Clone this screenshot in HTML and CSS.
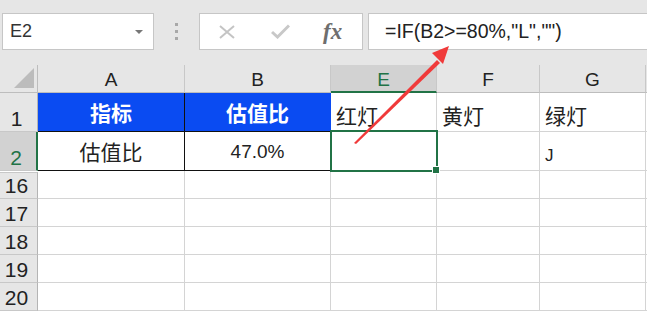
FILE: index.html
```html
<!DOCTYPE html>
<html lang="zh-CN">
<head>
    <meta charset="UTF-8">
    <meta name="viewport" content="width=device-width, initial-scale=1.0">
    <title>红绿灯公式</title>
    <link rel="stylesheet" href="styles.css">
</head>
<body>
    <div class="toolbar">
        <div class="namebox">
            <span>E2</span>
            <span class="drop"></span>
        </div>
        <div class="grip"><i></i><i></i><i></i></div>
        <div class="fx-buttons">
            <svg width="18" height="14" viewBox="0 0 18 14"><path d="M2 1 L16 13 M16 1 L2 13" stroke="#c4c4c4" stroke-width="2" fill="none"/></svg>
            <svg width="19" height="15" viewBox="0 0 19 15"><path d="M1 8 L6.5 13 L18 1.5" stroke="#c8c8c8" stroke-width="3" fill="none"/></svg>
            <span class="fx">fx</span>
        </div>
        <div class="formula">=IF(B2&gt;=80%,"L","")</div>
    </div>

    <div class="sheet">
        <!-- шапка -->
        <div class="corner"><span></span></div>
        <div class="colhead">A</div>
        <div class="colhead">B</div>
        <div class="colhead active">E</div>
        <div class="colhead">F</div>
        <div class="colhead">G</div>
        <div class="colhead edge"></div>

        <!-- строка 1 -->
        <div class="rowhead">1</div>
        <div class="cell blue">指标</div>
        <div class="cell blue last">估值比</div>
        <div class="cell left">红灯</div>
        <div class="cell left">黄灯</div>
        <div class="cell left">绿灯</div>
        <div class="cell edge"></div>

        <!-- строка 2 -->
        <div class="rowhead active">2</div>
        <div class="cell boxed">估值比</div>
        <div class="cell boxed num">47.0%</div>
        <div class="cell selected"><span class="handle"></span></div>
        <div class="cell"></div>
        <div class="cell left j">J</div>
        <div class="cell edge"></div>

        <div class="rowhead gap">16</div>
        <div class="cell"></div><div class="cell"></div><div class="cell"></div><div class="cell"></div><div class="cell"></div><div class="cell edge"></div>
        <div class="rowhead">17</div>
        <div class="cell"></div><div class="cell"></div><div class="cell"></div><div class="cell"></div><div class="cell"></div><div class="cell edge"></div>
        <div class="rowhead">18</div>
        <div class="cell"></div><div class="cell"></div><div class="cell"></div><div class="cell"></div><div class="cell"></div><div class="cell edge"></div>
        <div class="rowhead">19</div>
        <div class="cell"></div><div class="cell"></div><div class="cell"></div><div class="cell"></div><div class="cell"></div><div class="cell edge"></div>
        <div class="rowhead">20</div>
        <div class="cell"></div><div class="cell"></div><div class="cell"></div><div class="cell"></div><div class="cell"></div><div class="cell edge"></div>
    </div>

    <svg class="arrow" width="647" height="312" viewBox="0 0 647 312">
        <path d="M354 143 L437 60 L440 63 L356 144 Z" fill="#f03a3a"/>
        <path d="M449 46 L432 53 L443 64 Z" fill="#f03a3a"/>
    </svg>
</body>
</html>
```

FILE: styles.css
```css
body {
    margin: 0;
    width: 647px;
    height: 312px;
    overflow: hidden;
    position: relative;
    background: #fff;
    font-family: "Liberation Sans", "Noto Sans CJK SC", sans-serif;
    color: #222;
}
.toolbar {
    height: 65px;
    background: #e6e6e6;
    display: flex;
    align-items: flex-start;
    padding-top: 13px;
    box-sizing: border-box;
}
.namebox {
    width: 152px;
    height: 37px;
    margin-left: 2px;
    background: #fff;
    border: 1px solid #c6c6c6;
    box-sizing: border-box;
    display: flex;
    align-items: center;
    justify-content: space-between;
    padding: 0 10px 0 7px;
    font-size: 18px;
    color: #333;
}
.drop {
    width: 0;
    height: 0;
    border-left: 4px solid transparent;
    border-right: 4px solid transparent;
    border-top: 4px solid #777;
}
.grip {
    width: 45px;
    display: flex;
    flex-direction: column;
    align-items: center;
    gap: 4px;
    padding-top: 10px;
}
.grip i {
    width: 3px;
    height: 3px;
    background: #a8a8a8;
}
.fx-buttons {
    width: 164px;
    height: 37px;
    background: #fff;
    border: 1px solid #c6c6c6;
    box-sizing: border-box;
    display: flex;
    align-items: center;
    padding-left: 18px;
    gap: 35px;
}
.fx {
    font-family: "Liberation Serif", serif;
    font-style: italic;
    font-weight: bold;
    font-size: 23px;
    color: #6e6e6e;
    margin-left: -2px;
}
.formula {
    flex: 1;
    height: 37px;
    margin-left: 5px;
    background: #fff;
    border: 1px solid #c6c6c6;
    border-right: none;
    box-sizing: border-box;
    padding-left: 16px;
    font-size: 19.5px;
    line-height: 34px;
    color: #222;
}
.sheet {
    display: grid;
    grid-template-columns: 38px 147px 146px 106px 103px 106px 1fr;
    grid-template-rows: 28px 39px 39px repeat(5, 28px) 1fr;
    height: 247px;
}
.sheet > div {
    box-sizing: border-box;
    border-right: 1px solid #d4d4d4;
    border-bottom: 1px solid #d4d4d4;
}
.corner {
    background: #e6e6e6;
    position: relative;
    border-right: 1px solid #bdbdbd !important;
    border-bottom: 1px solid #bdbdbd !important;
}
.corner span {
    position: absolute;
    right: 3px;
    bottom: 4px;
    width: 0;
    height: 0;
    border-left: 20px solid transparent;
    border-bottom: 20px solid #bcbcbc;
}
.colhead {
    background: #e6e6e6;
    border-right: 1px solid #c8c8c8 !important;
    border-bottom: 1px solid #bdbdbd !important;
    display: flex;
    justify-content: center;
    align-items: flex-end;
    padding-bottom: 1px;
    font-size: 19px;
    color: #222;
}
.colhead.active {
    background: #d2d2d2;
    color: #217346;
    border-bottom: 2px solid #217346 !important;
    padding-bottom: 0;
}
.colhead.edge, .cell.edge {
    border-right: none !important;
}
.rowhead {
    background: #e6e6e6;
    border-right: 1px solid #b4b4b4 !important;
    border-bottom: 1px solid #c8c8c8 !important;
    display: flex;
    justify-content: center;
    align-items: flex-end;
    padding-right: 4px;
    font-size: 21px;
    line-height: 24px;
    color: #222;
}
.rowhead.active {
    background: #d2d2d2;
    color: #217346;
    border-right: 2px solid #217346 !important;
}
.rowhead.gap {
    border-top: 1px solid #c8c8c8;
    margin-top: 1px;
}
.cell {
    display: flex;
    justify-content: center;
    align-items: flex-end;
    padding-bottom: 5px;
    font-family: "Noto Sans CJK SC", sans-serif;
    font-size: 21px;
    line-height: 28px;
    color: #222;
}
.cell.left {
    justify-content: flex-start;
    padding-left: 5px;
    padding-bottom: 2px;
}
.cell.blue {
    background: #0a4bf2;
    color: #fff;
    font-weight: bold;
    border-right: 1px solid #111 !important;
    border-bottom: 1px solid #111 !important;
}
.cell.blue.last {
    border-right: 1px solid #0a4bf2 !important;
}
.cell.boxed {
    border-right: 1px solid #111 !important;
    border-bottom: 1px solid #111 !important;
}
.cell.num {
    font-family: "Liberation Sans", sans-serif;
    font-size: 19px;
    padding-bottom: 4px;
}
.cell.j {
    font-family: "Liberation Sans", sans-serif;
    font-size: 17px;
    padding-bottom: 0;
}
.cell.selected {
    position: relative;
}
.cell.selected::after {
    content: "";
    position: absolute;
    left: -1px;
    top: -2px;
    right: -2px;
    bottom: -2px;
    border: 2px solid #217346;
}
.handle {
    position: absolute;
    right: -4px;
    bottom: -4px;
    width: 6px;
    height: 6px;
    background: #217346;
    border: 1px solid #fff;
    z-index: 2;
}
.arrow {
    position: absolute;
    left: 0;
    top: 0;
    pointer-events: none;
}
```
